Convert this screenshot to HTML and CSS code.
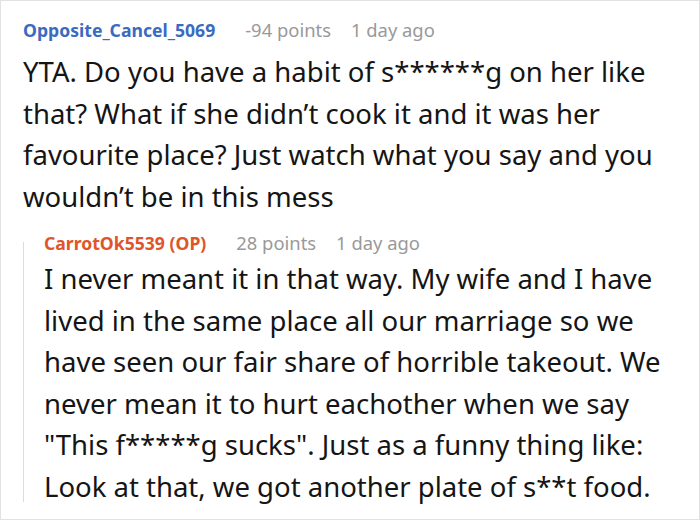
FILE: index.html
```html
<!DOCTYPE html>
<html>
<head>
<meta charset="utf-8">
<link rel="stylesheet" href="styles.css">
</head>
<body>
<div class="frame">
  <div class="comment">
    <div class="meta">
      <span class="user">Opposite_Cancel_5069</span>
      <span class="info">-94 points</span>
      <span class="info">1 day ago</span>
    </div>
    <p class="body">YTA. Do you have a habit of s******g on her like that? What if she didn’t cook it and it was her favourite place? Just watch what you say and you wouldn’t be in this mess</p>
    <div class="reply">
      <div class="meta">
        <span class="user op">CarrotOk5539 (OP)</span>
        <span class="info">28 points</span>
        <span class="info">1 day ago</span>
      </div>
      <p class="body reply-body">I never meant it in that way. My wife and I have lived in the same place all our marriage so we have seen our fair share of horrible takeout. We never mean it to hurt eachother when we say "This f*****g sucks". Just as a funny thing like: Look at that, we got another plate of s**t food.</p>
    </div>
  </div>
</div>
</body>
</html>
```
FILE: styles.css
```css
html, body {
  margin: 0;
  padding: 0;
  background: #fff;
}
.frame {
  width: 700px;
  height: 520px;
  box-sizing: border-box;
  border: 1px solid #e2e2e2;
  overflow: hidden;
  font-family: "Noto Sans", "Open Sans", sans-serif;
}
.comment {
  padding: 16px 10px 0 22px;
}
.meta {
  display: flex;
  align-items: baseline;
  gap: 20px;
  font-size: 17.6px;
  line-height: 26px;
}
.user {
  font-weight: 700;
  color: #3a6bbf;
  margin-right: 10px;
}
.user.op {
  color: #e0542a;
}
.info {
  color: #999;
  font-size: 18.4px;
}
.body {
  margin: 8px 0 0 0;
  font-size: 27.5px;
  line-height: 41.5px;
  color: #151515;
}
.reply-body {
  margin-top: 2px;
}
.reply {
  margin-top: 13px;
  padding-left: 21px;
  background: linear-gradient(#dcdcdc, #dcdcdc) no-repeat 0 12px / 1px 260px;
}
```
